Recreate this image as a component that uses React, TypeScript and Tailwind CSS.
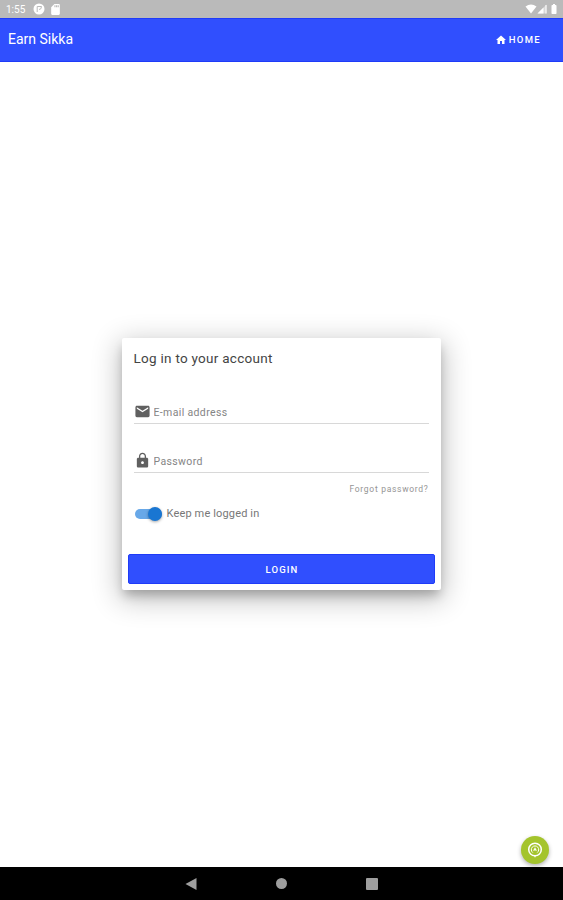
import React, { useState } from "react";
import { MdBatteryFull, MdEmail, MdHome, MdLock, MdSdCard } from "react-icons/md";

function StatusBar() {
  return (
    <div className="flex h-[18px] items-center bg-[#bababa] pr-[3px] pl-[6px] text-white">
      <span className="w-[27px] pt-[1px] text-[10px] leading-none">1:55</span>
      <svg viewBox="0 0 12 12" className="h-[12px] w-[12px]">
        <circle cx="6" cy="6" r="5.5" fill="#fff" />
        <path d="M4.2 9V3.5H8.5Q8.5 6.5 6 6.5" fill="none" stroke="#bababa" strokeWidth="1" />
      </svg>
      <MdSdCard className="ml-[4px] h-[13px] w-[13px]" />
      <div className="ml-auto flex items-center">
        <svg viewBox="0 0 12 10" className="h-[10px] w-[12px]">
          <path d="M0.5 2.5Q6-1.5 11.5 2.5L6 9.5Z" fill="#fff" />
        </svg>
        <svg viewBox="0 0 10 10" className="h-[10px] w-[10px]">
          <path d="M9.5 0.5V9.5H0.5Z" fill="#fff" fillOpacity="0.45" />
          <path d="M6.5 3.5V9.5H0.5Z" fill="#fff" />
          <path d="M9 1V9.5" stroke="#fff" strokeWidth="1" />
        </svg>
        <MdBatteryFull className="ml-[1px] h-[12px] w-[12px]" />
      </div>
    </div>
  );
}

function NavBar() {
  return (
    <div className="flex h-[33px] items-center justify-center bg-black">
      <svg viewBox="0 0 12 14" className="h-[14px] w-[12px]">
        <path d="M11.5 1V13L0.5 7Z" fill="#9e9e9e" />
      </svg>
      <div className="ml-[79px] h-[11px] w-[11px] rounded-full bg-[#9e9e9e]" />
      <div className="ml-[79px] h-[12px] w-[12px] rounded-[1px] bg-[#9e9e9e]" />
    </div>
  );
}

export default function App() {
  const [email, setEmail] = useState("");
  const [password, setPassword] = useState("");
  const [keep, setKeep] = useState(true);

  function handleSubmit(e: React.FormEvent<HTMLFormElement>) {
    e.preventDefault();
  }

  return (
    <div className="flex h-[900px] w-[563px] flex-col overflow-hidden bg-white font-[Roboto,sans-serif]">
      <StatusBar />
      <header className="flex h-[44px] items-center justify-between border-y border-[#1f3bf8] bg-[#304ffe] pr-[22px] pl-[8px] text-white">
        <h1 className="pb-[2px] text-[14px] leading-none">Earn Sikka</h1>
        <a href="#" className="flex items-center text-[9.5px] leading-none font-medium tracking-[1.3px]">
          <MdHome className="mr-[2px] h-[12px] w-[12px]" />
          HOME
        </a>
      </header>

      <main className="flex flex-1 flex-col items-center pt-[276px]">
        <form
          className="mr-[1px] flex h-[252px] w-[319px] flex-col rounded-[2px] bg-white px-[6px] pb-[6px] shadow-[0_7px_10px_-2px_rgba(0,0,0,0.24),0_7px_28px_3px_rgba(0,0,0,0.24)]"
          onSubmit={handleSubmit}
        >
          <div className="px-[6px]">
            <h2 className="pt-[12px] text-[13.5px] leading-[16px] tracking-[0.27px] text-[#444]">
              Log in to your account
            </h2>
            <label className="mt-[34px] flex h-[24px] items-center border-b border-[#d8d8d8]">
              <MdEmail className="h-[17px] w-[17px] text-[#606060]" />
              <input
                type="text"
                placeholder="E-mail address"
                value={email}
                className="ml-[3px] min-w-0 flex-1 pt-[2px] text-[10.5px] leading-[14px] tracking-[0.36px] outline-none placeholder:text-[#858585]"
                onChange={(e) => setEmail(e.target.value)}
              />
            </label>
            <label className="mt-[25px] flex h-[24px] items-center border-b border-[#d8d8d8]">
              <MdLock className="h-[17px] w-[17px] text-[#606060]" />
              <input
                type="password"
                placeholder="Password"
                value={password}
                className="ml-[3px] min-w-0 flex-1 pt-[2px] text-[10.5px] leading-[14px] tracking-[0.36px] outline-none placeholder:text-[#858585]"
                onChange={(e) => setPassword(e.target.value)}
              />
            </label>
            <a href="#" className="mt-[10px] block text-right text-[8.5px] leading-[12px] tracking-[0.7px] text-[#959595]">
              Forgot password?
            </a>
            <button
              type="button"
              className="mt-[11px] flex h-[16px] items-center text-[11px] tracking-[0.15px] text-[#777]"
              onClick={() => setKeep(!keep)}
            >
              <span
                className={`mr-[5px] ml-[1px] flex h-[10px] w-[27px] items-center rounded-full ${
                  keep ? "justify-end bg-[#68a8e8]" : "justify-start bg-[#bdbdbd]"
                }`}
              >
                <span className="h-[14px] w-[14px] shrink-0 rounded-full bg-[#1976d2] shadow-[0_1px_3px_rgba(0,0,0,0.35)]" />
              </span>
              Keep me logged in
            </button>
          </div>
          <button
            type="submit"
            className="mt-auto h-[30px] rounded-[2px] border border-[#1f3bf8] bg-[#304ffe] pt-[2px] pl-[2px] text-[9.5px] font-medium tracking-[1.1px] text-white"
          >
            LOGIN
          </button>
        </form>

        <button
          type="button"
          className="mt-auto mr-[14px] mb-[3px] flex h-[28px] w-[28px] items-center justify-center self-end rounded-full bg-[#a4c42c] shadow-[0_2px_4px_rgba(0,0,0,0.3)]"
        >
          <svg viewBox="0 0 16 16" className="h-[16px] w-[16px]" fill="none" stroke="#fff">
            <circle cx="8" cy="7.5" r="6.3" strokeWidth="1.5" />
            <path d="M5.8 10.6A3.7 3.7 0 1 1 10.2 10.6" strokeWidth="1" />
            <path d="M6.7 8.7L8 6.4L9.3 8.7M8 13.5V15.2" strokeWidth="1.2" />
          </svg>
        </button>
      </main>
      <NavBar />
    </div>
  );
}
